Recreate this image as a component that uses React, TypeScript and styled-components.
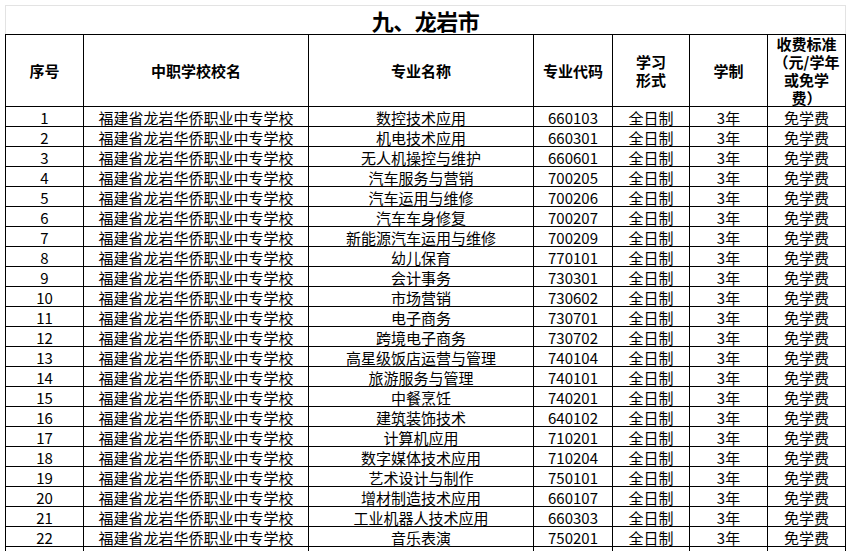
import React from "react";
import styled, { createGlobalStyle } from "styled-components";

const GlobalStyle = createGlobalStyle`
  html, body {
    margin: 0;
    padding: 0;
    background: #ffffff;
    overflow: hidden;
  }
  body {
    font-family: "Noto Sans CJK SC", "Noto Sans", sans-serif;
    color: #000000;
  }
`;

const Page = styled.div`
  padding: 5px 0 0 5px;
  width: 841px;
`;

const TitleBar = styled.div`
  box-sizing: border-box;
  height: 29px;
  border-top: 1px solid #e3e3e3;
  border-left: 1px solid #e3e3e3;
  border-right: 1px solid #e3e3e3;
  padding-top: 3px;
  text-align: center;
  font-size: 22px;
  line-height: 22px;
  font-weight: 700;
  letter-spacing: -0.5px;
`;

const Grid = styled.div`
  display: grid;
  grid-template-columns: 78px 225px 225px 79px 77px 78px 78px;
  border-top: 1px solid #000;
  border-left: 1px solid #000;
  width: 841px;
  box-sizing: border-box;
`;

const HeadCell = styled.div`
  box-sizing: border-box;
  height: 72px;
  border-right: 1px solid #000;
  border-bottom: 1px solid #000;
  display: flex;
  align-items: center;
  justify-content: center;
  text-align: center;
  font-size: 15px;
  font-weight: 700;
  line-height: 18px;
  white-space: pre-line;
`;

const Cell = styled.div`
  box-sizing: border-box;
  height: 20px;
  border-right: 1px solid #000;
  border-bottom: 1px solid #000;
  text-align: center;
  font-size: 15px;
  line-height: 19px;
  padding-top: 1px;
  white-space: nowrap;
  overflow: hidden;
`;

const SCHOOL = "福建省龙岩华侨职业中专学校";

const rows: [string, string][] = [
  ["数控技术应用", "660103"],
  ["机电技术应用", "660301"],
  ["无人机操控与维护", "660601"],
  ["汽车服务与营销", "700205"],
  ["汽车运用与维修", "700206"],
  ["汽车车身修复", "700207"],
  ["新能源汽车运用与维修", "700209"],
  ["幼儿保育", "770101"],
  ["会计事务", "730301"],
  ["市场营销", "730602"],
  ["电子商务", "730701"],
  ["跨境电子商务", "730702"],
  ["高星级饭店运营与管理", "740104"],
  ["旅游服务与管理", "740101"],
  ["中餐烹饪", "740201"],
  ["建筑装饰技术", "640102"],
  ["计算机应用", "710201"],
  ["数字媒体技术应用", "710204"],
  ["艺术设计与制作", "750101"],
  ["增材制造技术应用", "660107"],
  ["工业机器人技术应用", "660303"],
  ["音乐表演", "750201"],
  ["舞蹈表演", "750202"],
];

const headers = [
  "序号",
  "中职学校校名",
  "专业名称",
  "专业代码",
  "学习\n形式",
  "学制",
  "收费标准\n（元/学年\n或免学\n费）",
];

export default function App() {
  return (
    <>
      <GlobalStyle />
      <Page>
        <TitleBar>九、龙岩市</TitleBar>
        <Grid>
          {headers.map((h) => (
            <HeadCell key={h}>{h}</HeadCell>
          ))}
          {rows.map(([major, code], i) => (
            <React.Fragment key={code}>
              <Cell>{i + 1}</Cell>
              <Cell>{SCHOOL}</Cell>
              <Cell>{major}</Cell>
              <Cell>{code}</Cell>
              <Cell>全日制</Cell>
              <Cell>3年</Cell>
              <Cell>免学费</Cell>
            </React.Fragment>
          ))}
        </Grid>
      </Page>
    </>
  );
}
